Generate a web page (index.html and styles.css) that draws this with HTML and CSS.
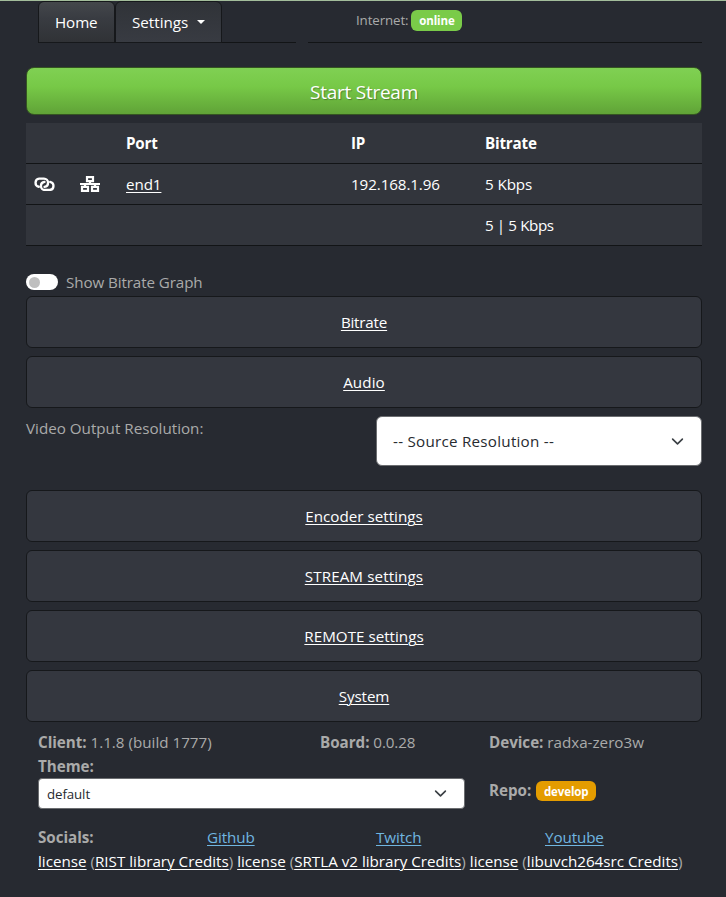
FILE: index.html
```html
<!DOCTYPE html>
<html lang="en">
<head>
<meta charset="utf-8">
<title>Stream control</title>
<link rel="stylesheet" href="styles.css">
</head>
<body>
<main class="container">
  <header class="top">
    <nav class="tabs">
      <a class="tab active" href="#"><span>Home</span></a>
      <a class="tab" href="#"><span class="loose">Settings</span><i class="caret"></i></a>
    </nav>
    <div class="status"><span>Internet:</span><span class="badge online">online</span></div>
  </header>

  <button class="start">Start Stream</button>

  <table class="ports">
    <thead><tr><th class="c1"></th><th class="c2"></th><th class="c3">Port</th><th class="c4">IP</th><th>Bitrate</th></tr></thead>
    <tbody>
      <tr>
        <td><svg class="icon link" viewBox="0 0 20 14"><g fill="none" stroke="#fff" stroke-width="2.2" stroke-linecap="round"><path d="M4.600 9.300A3.900 3.900 0 0 1 4.900 1.600H9.500A3.900 3.900 0 0 1 13.400 5.500A3.900 3.900 0 0 1 10 9.400"/><path d="M15.400 4.700A3.900 3.900 0 0 1 15.100 12.400H10.500A3.900 3.900 0 0 1 6.600 8.500A3.900 3.900 0 0 1 10 4.600"/></g></svg></td>
        <td><svg class="icon net" viewBox="0 0 20 16"><g fill="none" stroke="#fff" stroke-width="2.2"><path d="M7 1.100h6v4H7zM2 10.900h6v4H2zM12 10.900h6v4h-6zM0 8h20M10 5v3M5 8v3M15 8v3"/></g></svg></td>
        <td><a href="#">end1</a></td><td class="ip">192.168.1.96</td><td>5 Kbps</td>
      </tr>
      <tr><td></td><td></td><td></td><td></td><td class="total">5 | 5 Kbps</td></tr>
    </tbody>
  </table>

  <label class="switch-row"><span class="switch"></span><span>Show Bitrate Graph</span></label>

  <section class="cards">
    <a class="card" href="#"><span class="tight">Bitrate</span></a>
    <a class="card" href="#"><span class="wide">Audio</span></a>
  </section>

  <div class="resolution">
    <span class="loose">Video Output Resolution:</span>
    <div class="select large"><span>-- Source Resolution --</span><svg class="chev" viewBox="0 0 16 16"><path d="m2 5 6 6 6-6"/></svg></div>
  </div>

  <section class="cards">
    <a class="card" href="#"><span class="loose">Encoder settings</span></a>
    <a class="card" href="#"><span class="wide">STREAM settings</span></a>
    <a class="card" href="#"><span class="loose">REMOTE settings</span></a>
    <a class="card" href="#"><span>System</span></a>
  </section>

  <footer class="foot">
    <div class="info">
      <span><b>Client:</b> <span class="loose">1.1.8 (build 1777)</span></span>
      <span><b>Board:</b> 0.0.28</span>
      <span><b>Device:</b> <span class="loose">radxa-zero3w</span></span>
    </div>
    <div class="theme-row">
      <div>
        <b class="theme">Theme:</b>
        <div class="select small"><span>default</span><svg class="chev" viewBox="0 0 16 16"><path d="m2 5 6 6 6-6"/></svg></div>
      </div>
      <div class="repo"><b>Repo:</b><span class="badge develop">develop</span></div>
    </div>
    <div class="socials"><b>Socials:</b><a href="#">Github</a><a href="#">Twitch</a><a href="#">Youtube</a></div>
    <div class="licenses"><a href="#">license</a> (<a href="#">RIST library Credits</a>) <a href="#">license</a> (<a href="#">SRTLA v2 library Credits</a>) <a href="#">license</a> (<a href="#">libuvch264src Credits</a>)</div>
  </footer>
</main>
</body>
</html>
```
FILE: styles.css
```css
* { box-sizing: border-box; }

body {
  margin: 0;
  min-height: 897px;
  border-top: 1px solid #a3bd9b;
  background: #272a31;
  color: #aaa;
  font: 15.2px/24px "Open Sans", "Noto Sans", sans-serif;
  letter-spacing: -0.1px;
  white-space: nowrap;
}

b { font-weight: 700; letter-spacing: -0.03px; }
th { font-weight: 700; letter-spacing: -0.2px; }
a { color: #fff; text-underline-offset: 2px; text-decoration-thickness: 1px; }
.loose { letter-spacing: 0; }
.wide { letter-spacing: 0.1px; }
.tight { letter-spacing: -0.2px; }

.container { width: 676px; margin: 0 0 0 26px; }

.top { display: flex; gap: 12px; height: 42px; padding-left: 12px; }
.tabs { display: flex; width: 258px; border-bottom: 1px solid #121416; }
.tab {
  display: flex;
  align-items: center;
  height: 42px;
  padding: 0 16px;
  border: 1px solid #16181b;
  border-radius: 6px 6px 0 0;
  background: linear-gradient(#303338, #383b42);
  text-decoration: none;
}
.tab:first-child { width: 77px; background: linear-gradient(#44474b, #393c42 40%, #303236); }
.tab:last-child { width: 107px; }
.caret { margin-left: 9px; border: 4.500px solid transparent; border-top-color: #fff; border-bottom: 0; }
.status {
  flex: 1;
  padding: 7px 0 0 48px;
  border-bottom: 1px solid #121416;
  font-size: 13.300px;
}
.badge {
  display: inline-block;
  height: 21px;
  margin-left: 3px;
  border-radius: 6px;
  color: #fff;
  font-size: 11.500px;
  font-weight: 700;
  line-height: 22px;
  text-align: center;
}
.online { width: 51px; background: #7acb49; }
.develop { width: 60px; height: 20px; margin: 2px 0 0 4px; line-height: 21px; background: #e49c00; }

.start {
  display: block;
  width: 100%;
  height: 48px;
  margin: 24px 0 8px;
  padding: 2px 0 0;
  border: 1px solid #355522;
  border-radius: 8px;
  background: linear-gradient(#80d053, #77c947 40%, #60a337);
  color: #fff;
  font: 19px "Open Sans", sans-serif;
  letter-spacing: -0.25px;
  text-shadow: 1px 1px 1px rgba(0, 0, 0, .3);
}

.ports {
  width: 100%;
  border-collapse: separate;
  border-spacing: 0;
  table-layout: fixed;
  background: #32353c;
  color: #fff;
}
.ports th, .ports td { height: 41px; padding: 0 8px; border-bottom: 1px solid #121416; text-align: left; }
.ports .total { letter-spacing: -0.4px; }
.c1 { width: 46px; }
.c2 { width: 46px; }
.c3 { width: 225px; }
.c4 { width: 134px; }
.icon { display: block; width: 20px; }
.link { width: 21px; height: 14.700px; }
.net { height: 16px; }

.switch-row { display: flex; align-items: center; height: 24px; margin: 24px 0 2px; }
.switch { width: 32px; height: 16px; margin-right: 8px; padding: 2.500px; border-radius: 8px; background: #fff; }
.switch::before { content: ""; display: block; width: 11px; height: 11px; border-radius: 50%; background: #bfbfbf; }

.cards { display: grid; gap: 8px; }
.card {
  display: grid;
  place-items: center;
  height: 52px;
  border: 1px solid #16181b;
  border-radius: 6px;
  background: #34373f;
}

.resolution { display: flex; justify-content: space-between; height: 50px; margin: 8px 0 24px; }
.select { display: flex; justify-content: space-between; align-items: center; border: 1px solid #6b6d70; background: #fff; color: #272b30; }
.large { width: 326px; padding: 0 17px 0 16px; border-radius: 6px; letter-spacing: 0.25px; }
.small { width: 427px; height: 31px; padding: 0 17px 0 8px; border-radius: 4px; font-size: 13.300px; }
.chev { width: 13px; height: 13px; fill: none; stroke: #3a3f44; stroke-width: 2; stroke-linecap: round; stroke-linejoin: round; }

.foot { margin-top: 8px; padding-left: 12px; }
.info { display: grid; grid-template-columns: 282px 169px 1fr; }
.theme-row { display: grid; grid-template-columns: 451px 1fr; height: 71px; }
.theme { display: block; }
.repo { display: flex; align-items: center; height: 24px; margin-top: 24px; }
.repo .badge { margin-left: 5px; }
.socials { display: grid; grid-template-columns: repeat(4, 169px); }
.socials a { color: #70b6e0; justify-self: start; }
.licenses { letter-spacing: 0; }
```
